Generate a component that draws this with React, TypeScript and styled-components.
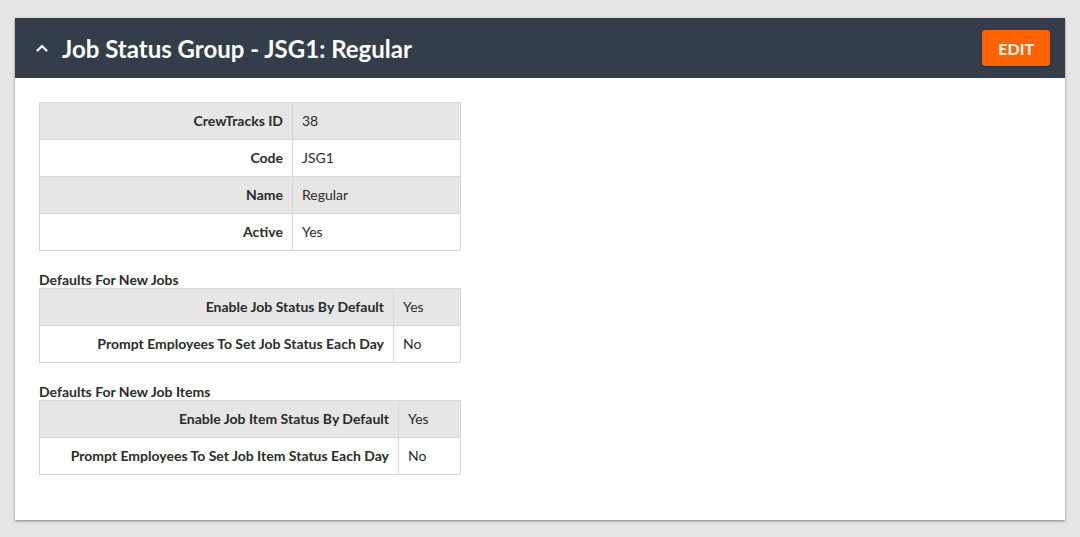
import React, { FunctionComponent } from 'react';
import styled, { createGlobalStyle } from 'styled-components';

const DARK = '#343e4b';
const ORANGE = '#ff6300';
const BORDER = '#d8d8d8';
const STRIPE = '#e6e6e6';
const TEXT = '#2b2b2b';

const GlobalStyle = createGlobalStyle`
  html, body {
    margin: 0;
    padding: 0;
    background: #e5e5e5;
    font-family: Lato, "Open Sans", sans-serif;
    color: ${TEXT};
  }
`;

const Page = styled.div`
  padding: 18px 15px;
`;

const Card = styled.section`
  background: #fff;
  box-shadow: 0 1px 2px rgba(0, 0, 0, 0.35), 0 2px 4px rgba(0, 0, 0, 0.1);
`;

const Header = styled.header`
  display: flex;
  align-items: center;
  justify-content: space-between;
  height: 60px;
  padding: 0 15px 0 21px;
  background: ${DARK};
`;

const TitleWrap = styled.div`
  display: flex;
  align-items: center;
  gap: 14px;
`;

const Title = styled.h1`
  margin: 0;
  font-size: 24px;
  font-weight: 700;
  color: #fff;
`;

const EditButton = styled.button`
  height: 36px;
  padding: 0 16px;
  border: none;
  border-radius: 3px;
  background: ${ORANGE};
  color: #fff;
  font-family: inherit;
  font-size: 16px;
  font-weight: 700;
  box-shadow: 0 1px 2px rgba(0, 0, 0, 0.4);
  cursor: pointer;
`;

const Body = styled.div`
  padding: 24px 24px 45px;
  display: flex;
  flex-direction: column;
`;

const SectionTitle = styled.h3`
  margin: 21px 0 0;
  font-size: 14px;
  font-weight: 700;
  line-height: 16px;
`;

const Table = styled.table`
  width: 422px;
  border-collapse: collapse;
  font-size: 14px;
`;

const Row = styled.tr<{ $striped: boolean }>`
  background: ${({ $striped }) => ($striped ? STRIPE : '#fff')};
`;

const Label = styled.th<{ $width: number }>`
  width: ${({ $width }) => $width}px;
  box-sizing: border-box;
  height: 35px;
  padding: 0 9px 1px;
  text-align: right;
  font-weight: 700;
  border: 1px solid ${BORDER};
`;

const Value = styled.td`
  height: 35px;
  padding: 0 9px 1px;
  border: 1px solid ${BORDER};
`;

const Chevron: FunctionComponent = () => (
  <svg width="12" height="8" viewBox="0 0 12 8">
    <path d="M1.5 6.5 L6 2 L10.5 6.5" stroke="#fff" strokeWidth="2.2" fill="none" strokeLinecap="round" strokeLinejoin="round" />
  </svg>
);

type Entry = [string, string];

const InfoTable: FunctionComponent<{ rows: Entry[]; labelWidth: number }> = ({ rows, labelWidth }) => (
  <Table>
    <tbody>
      {rows.map(([k, v], i) => (
        <Row key={k} $striped={i % 2 === 0}>
          <Label $width={labelWidth}>{k}</Label>
          <Value>{v}</Value>
        </Row>
      ))}
    </tbody>
  </Table>
);

export default function App() {
  return (
    <>
      <GlobalStyle />
      <Page>
        <Card>
          <Header>
            <TitleWrap>
              <Chevron />
              <Title>Job Status Group - JSG1: Regular</Title>
            </TitleWrap>
            <EditButton>EDIT</EditButton>
          </Header>
          <Body>
            <InfoTable
              labelWidth={253}
              rows={[
                ['CrewTracks ID', '38'],
                ['Code', 'JSG1'],
                ['Name', 'Regular'],
                ['Active', 'Yes'],
              ]}
            />
            <SectionTitle>Defaults For New Jobs</SectionTitle>
            <InfoTable
              labelWidth={354}
              rows={[
                ['Enable Job Status By Default', 'Yes'],
                ['Prompt Employees To Set Job Status Each Day', 'No'],
              ]}
            />
            <SectionTitle>Defaults For New Job Items</SectionTitle>
            <InfoTable
              labelWidth={359}
              rows={[
                ['Enable Job Item Status By Default', 'Yes'],
                ['Prompt Employees To Set Job Item Status Each Day', 'No'],
              ]}
            />
          </Body>
        </Card>
      </Page>
    </>
  );
}
